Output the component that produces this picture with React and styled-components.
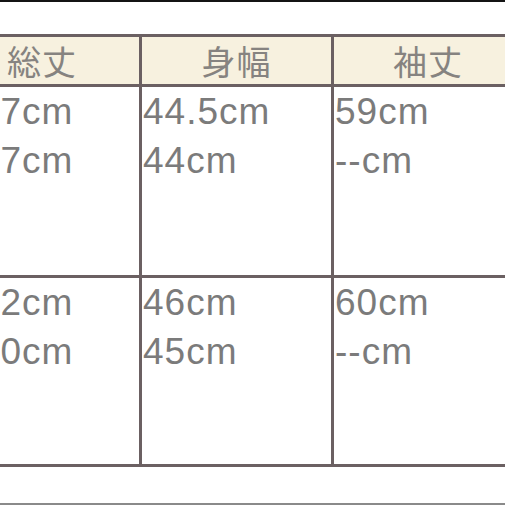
import React from "react";
import styled, { createGlobalStyle } from "styled-components";

const Global = createGlobalStyle`
  html, body { margin: 0; padding: 0; background: #ffffff; overflow: hidden; }
  body { width: 505px; height: 505px; }
`;

const Page = styled.div`
  width: 505px;
  height: 505px;
  display: flex;
  flex-direction: column;
  overflow: hidden;
  background: #fff;
`;

const TopRule = styled.div`
  height: 2px;
  background: #141414;
  flex: none;
`;

const Spacer = styled.div`
  flex: ${(p) => (p.$grow ? 1 : "none")};
  height: ${(p) => (p.$h ? `${p.$h}px` : "auto")};
`;

const Table = styled.div`
  flex: none;
  margin-left: -58px;
  width: max-content;
  display: grid;
  grid-template-columns: 194px 189px 200px;
  grid-template-rows: 47px 188px 186px;
  gap: 3px;
  padding: 3px;
  background: #6b6062;
`;

const HeadCell = styled.div`
  background: #f7f1df;
  display: flex;
  align-items: center;
  justify-content: center;
  padding-right: ${(p) => (p.$shift ? `${p.$shift}px` : "0")};
  font-family: "Noto Sans CJK JP", "Noto Sans", sans-serif;
  font-size: 34px;
  color: #868380;
  letter-spacing: 1px;
`;

const Cell = styled.div`
  background: #fff;
  padding: 0 0 0 1px;
  font-family: "Liberation Sans", Arial, sans-serif;
  font-size: 37px;
  line-height: 49px;
  letter-spacing: 1px;
  color: #7b7b7b;
  white-space: nowrap;
  overflow: hidden;
`;

const Line = styled.div``;

const BottomRule = styled.div`
  height: 2px;
  background: #8a8a8a;
  flex: none;
`;

const headers = [
  { t: "総丈", s: 0 },
  { t: "身幅", s: 0 },
  { t: "袖丈", s: 12 },
];
const rows = [
  [["66.7cm", "65.7cm"], ["44.5cm", "44cm"], ["59cm", "--cm"]],
  [["68.2cm", "67.0cm"], ["46cm", "45cm"], ["60cm", "--cm"]],
];

export default function App() {
  return (
    <Page>
      <Global />
      <TopRule />
      <Spacer $h={32} />
      <Table>
        {headers.map((h) => (
          <HeadCell key={h.t} $shift={h.s}>
            {h.t}
          </HeadCell>
        ))}
        {rows.map((r, i) =>
          r.map((c, j) => (
            <Cell key={`${i}-${j}`}>
              {c.map((t, k) => (
                <Line key={k}>{t}</Line>
              ))}
            </Cell>
          ))
        )}
      </Table>
      <Spacer $grow />
      <BottomRule />
    </Page>
  );
}
